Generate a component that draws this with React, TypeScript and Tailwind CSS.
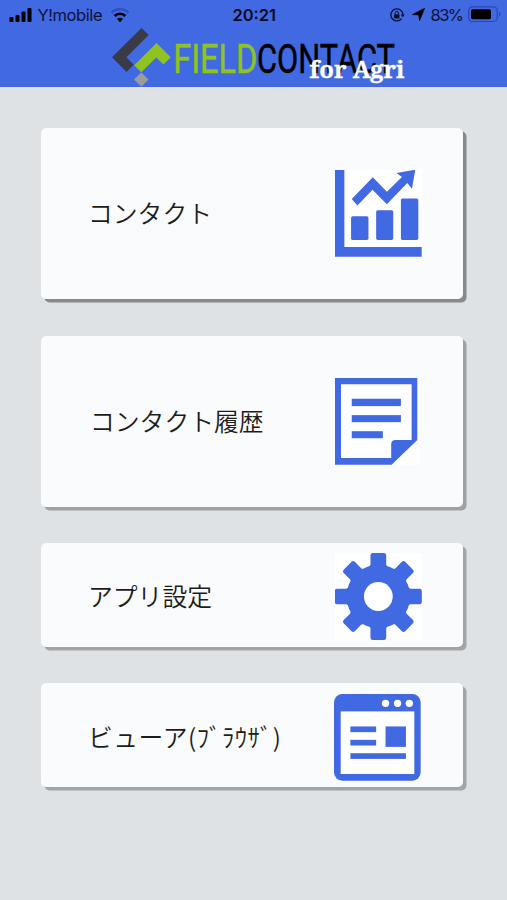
import type { ReactNode } from 'react';
import { clsx } from 'clsx';

const BLUE = '#4169e1';

function StatusBar() {
  return (
    <div className="flex h-[27px] items-center pt-[2px] text-[17px] leading-none">
      <div className="flex flex-1 items-center pl-[9px]">
        <svg width="24" height="14" viewBox="0 0 24 14" fill="#000">
          <rect x="0.5" y="9" width="4" height="5" rx="1" />
          <rect x="6.5" y="7" width="4" height="7" rx="1" />
          <rect x="12.5" y="3.5" width="4" height="10.5" rx="1" />
          <rect x="18.5" y="0" width="4" height="14" rx="1" />
        </svg>
        <svg width="67" height="20" className="ml-[4px]">
          <text x="0.5" y="15.5" fontSize="16.5" textLength="65" fill="#0b1238">Y!mobile</text>
        </svg>
        <svg width="20" height="16" viewBox="0 0 20 16" className="ml-[6px]" fill="none">
          <path d="M1.5 5.8a12 12 0 0 1 17 0" stroke="#2f50bd" strokeWidth="2.6" />
          <path d="M4.6 9a7.6 7.6 0 0 1 10.8 0" stroke="#000" strokeWidth="2.6" />
          <path d="M10 15.2l-3-3.1a4.4 4.4 0 0 1 6 0z" fill="#000" />
        </svg>
      </div>
      <svg width="46" height="20">
        <text x="0.5" y="15.8" fontSize="16.5" fontWeight="600" textLength="43.5" fill="#050a24">20:21</text>
      </svg>
      <div className="flex flex-1 items-center justify-end pr-[6px]">
        {/* Orientation lock */}
        <svg width="15" height="14" viewBox="0 0 15 14" fill="none" stroke="#0a1030">
          <path d="M12.9 6.8A6 6 0 1 0 11.6 10.6" strokeWidth="1.3" />
          <path d="M10.8 6.4h4l-2 2.8z" fill="#0a1030" stroke="none" />
          <rect x="4.1" y="6.2" width="5.4" height="4.2" rx="0.6" fill="#0a1030" stroke="none" />
          <path d="M5.2 6.4V5a1.6 1.6 0 0 1 3.2 0v1.4" strokeWidth="1" />
        </svg>
        {/* Location */}
        <svg width="13" height="13" viewBox="0 0 13 13" className="ml-[7px]" fill="#000">
          <path d="M0.3 6.6L12.6 0.3L7.6 12.8L6.6 6.9z" stroke="#000" strokeWidth="0.6" />
        </svg>
        <svg width="35" height="20" className="ml-[5px]">
          <text x="0.5" y="15.8" fontSize="16.5" textLength="33.5" fill="#0b1238">83%</text>
        </svg>
        <svg width="33" height="17" viewBox="0 0 33 17" className="ml-[3px]">
          <rect x="0.7" y="0.9" width="28.6" height="14.6" rx="3.8" fill="none" stroke="#2b48a8" strokeWidth="1.2" />
          <rect x="3" y="3.2" width="20" height="10" rx="1.6" fill="#000" />
          <path d="M31 6v4.4a2.4 2.4 0 0 0 0-4.4z" fill="#2b48a8" />
        </svg>
      </div>
    </div>
  );
}

function Logo() {
  return (
    <svg width="300" height="60" viewBox="110 27 300 60" className="ml-[110px] block">
      <path d="M141.5 28L148.7 35L126.5 57.3L133.7 64.7L126.5 72L112 57.3z" fill="#3b3b47" />
      <path d="M156.5 43L170.8 57.3L163.5 64.5L156.3 57.5L141.3 72.3L134.2 65.2z" fill="#8fc31f" />
      <path d="M141.3 72.5L148.5 79.6L141.3 86.8L134 79.6z" fill="#9b9c9c" />
      <g fontSize="40.5" fontFamily='Roboto, "Liberation Sans", sans-serif' strokeWidth="0.5">
        <text x="173.3" y="73" textLength="84" lengthAdjust="spacingAndGlyphs" fill="#8fc31f" stroke="#8fc31f">FIELD</text>
        <text x="257" y="73" textLength="138" lengthAdjust="spacingAndGlyphs" fill="#000" stroke="#000">CONTACT</text>
      </g>
      <text
        x="309.5"
        y="78"
        fontSize="23.5"
        fontWeight="700"
        fontFamily='"Noto Serif", "DejaVu Serif", serif'
        textLength="95"
        lengthAdjust="spacingAndGlyphs"
        fill="#fff"
        stroke="#fff"
        strokeWidth="0.3"
      >
        for Agri
      </text>
    </svg>
  );
}

function ChartIcon() {
  return (
    <svg width="87" height="87" viewBox="45 45 260 260" fill={BLUE}>
      <rect x="45" y="45" width="260" height="260" fill="#fff" />
      <path d="M45 45h28v230h231v29H45z" />
      <rect x="93" y="183" width="52" height="71" rx="5" />
      <rect x="168" y="165" width="51" height="89" rx="5" />
      <rect x="242" y="130" width="52" height="124" rx="5" />
      <path d="M95 132L158 67L200 110L245 66L229 54L285 44L275 101L261 84L200 147L157 104L112 151z" />
    </svg>
  );
}

function NoteIcon() {
  return (
    <svg width="87" height="87" viewBox="45 38 260 260" fill={BLUE}>
      <rect x="45" y="38" width="255" height="259" fill="#fff" />
      <path
        fillRule="evenodd"
        d="M45 38H291V223L214 297H45zM63 57V277H213V236Q213 223 226 223H274V57z"
      />
      <rect x="95" y="100" width="147" height="22" />
      <rect x="95" y="149" width="147" height="21" />
      <rect x="95" y="197" width="93" height="21" />
    </svg>
  );
}

const TEETH = [0, 45, 90, 135, 180, 225, 270, 315];

function GearIcon() {
  return (
    <svg width="87" height="87" viewBox="45 40 260 260" fill={BLUE} className="mt-[3px]">
      <rect x="45" y="40" width="260" height="260" fill="#fff" />
      {TEETH.map((angle) => (
        <path
          key={angle}
          transform={`rotate(${angle} 174.5 170)`}
          d="M151 47Q151 40 158 40H191Q198 40 198 47V74Q199 80 206 83L190 112H159L143 83Q150 80 151 74z"
        />
      ))}
      <circle cx="174.5" cy="170" r="95" />
      <circle cx="174.5" cy="170" r="43" fill="#fff" />
    </svg>
  );
}

function BrowserIcon() {
  return (
    <svg width="87" height="87" viewBox="42 56 260 260" fill={BLUE} className="mt-[5px]">
      <rect x="42" y="56" width="259" height="259" rx="25" />
      <rect x="62" y="108" width="220" height="187" fill="#fff" />
      <g fill="#fff">
        <circle cx="196" cy="84" r="11" />
        <circle cx="232" cy="84" r="11" />
        <circle cx="267" cy="84" r="11" />
      </g>
      <rect x="91" y="153" width="77" height="17" />
      <rect x="91" y="193" width="77" height="17" />
      <rect x="196" y="153" width="61" height="61" />
      <rect x="91" y="233" width="166" height="17" />
    </svg>
  );
}

interface MenuCardProps {
  label: ReactNode;
  icon: ReactNode;
  className: string;
}

function MenuCard({ label, icon, className }: MenuCardProps) {
  return (
    <button
      className={clsx(
        'flex w-[422px] items-center justify-between rounded-[5px] bg-[#f9fbfc] text-left text-[24.8px] leading-none font-[350] text-[#1c1c1c]',
        className
      )}
    >
      <span className="whitespace-nowrap">{label}</span>
      {icon}
    </button>
  );
}

export default function App() {
  return (
    <div className='min-h-[900px] w-[507px] bg-[#dee2e5] font-["Inter","Noto_Sans_CJK_JP",sans-serif]'>
      <header className="h-[87px] bg-[#4169e1]">
        <StatusBar />
        <Logo />
      </header>
      <main className='flex flex-col pt-[41px] pl-[41px] font-["Noto_Sans_CJK_JP",sans-serif]'>
        <MenuCard
          label={<span className="block pb-[3px]">コンタクト</span>}
          icon={<ChartIcon />}
          className="h-[171px] pr-[41px] pl-[47px] shadow-[3.5px_3.5px_0_#87898b]"
        />
        <MenuCard
          label={<span className="block pb-[2px]">コンタクト履歴</span>}
          icon={<NoteIcon />}
          className="mt-[36.5px] h-[171px] pr-[41px] pl-[49px] shadow-[3.5px_3.5px_0_#9fa2a4]"
        />
        <MenuCard
          label={<span className="block pt-px">アプリ設定</span>}
          icon={<GearIcon />}
          className="mt-[36.5px] h-[104px] pr-[41px] pl-[47px] shadow-[3.5px_3.5px_0_#a2a5a7]"
        />
        <MenuCard
          label={<span className="block pt-[2px] tracking-[0.45px]">ビューア(ﾌﾞﾗｳｻﾞ)</span>}
          icon={<BrowserIcon />}
          className="mt-[36px] h-[104px] pr-[42px] pl-[47px] shadow-[3.5px_3.5px_0_#a2a5a7]"
        />
      </main>
    </div>
  );
}
